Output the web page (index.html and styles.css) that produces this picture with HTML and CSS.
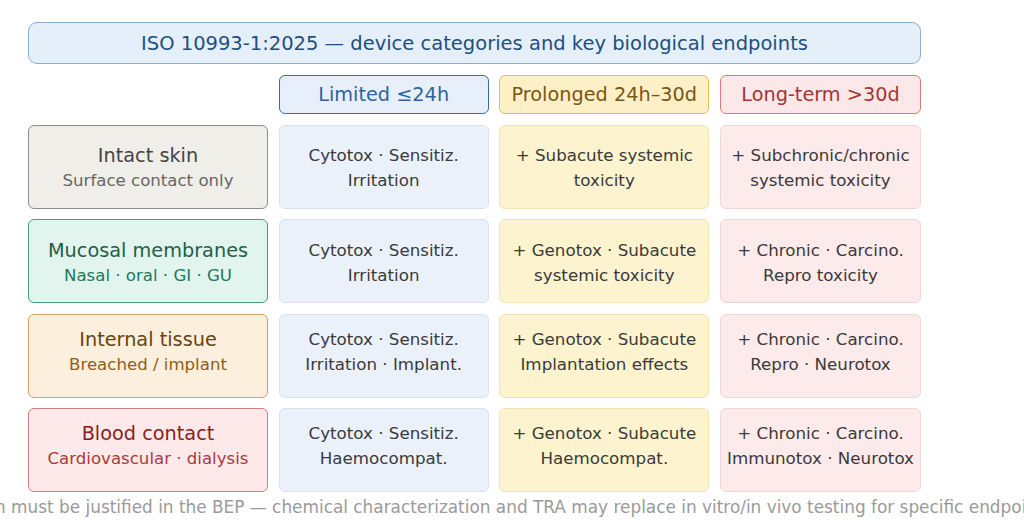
FILE: index.html
```html
<!DOCTYPE html>
<html>
<head>
<meta charset="utf-8">
<link rel="stylesheet" href="styles.css">
</head>
<body>
<div class="page">
  <div class="title">ISO 10993-1:2025 — device categories and key biological endpoints</div>
  <div class="grid">
    <div class="blank"></div>
    <div class="head h-blue">Limited ≤24h</div>
    <div class="head h-yellow">Prolonged 24h–30d</div>
    <div class="head h-red">Long-term &gt;30d</div>

    <div class="cat c-grey"><div class="cat-name">Intact skin</div><div class="cat-sub">Surface contact only</div></div>
    <div class="cell blue">Cytotox · Sensitiz.<br>Irritation</div>
    <div class="cell yellow">+ Subacute systemic<br>toxicity</div>
    <div class="cell red">+ Subchronic/chronic<br>systemic toxicity</div>

    <div class="cat c-green"><div class="cat-name">Mucosal membranes</div><div class="cat-sub">Nasal · oral · GI · GU</div></div>
    <div class="cell blue">Cytotox · Sensitiz.<br>Irritation</div>
    <div class="cell yellow">+ Genotox · Subacute<br>systemic toxicity</div>
    <div class="cell red">+ Chronic · Carcino.<br>Repro toxicity</div>

    <div class="cat c-orange top"><div class="cat-name">Internal tissue</div><div class="cat-sub">Breached / implant</div></div>
    <div class="cell blue top">Cytotox · Sensitiz.<br>Irritation · Implant.</div>
    <div class="cell yellow top">+ Genotox · Subacute<br>Implantation effects</div>
    <div class="cell red top">+ Chronic · Carcino.<br>Repro · Neurotox</div>

    <div class="cat c-pink top"><div class="cat-name">Blood contact</div><div class="cat-sub">Cardiovascular · dialysis</div></div>
    <div class="cell blue top">Cytotox · Sensitiz.<br>Haemocompat.</div>
    <div class="cell yellow top">+ Genotox · Subacute<br>Haemocompat.</div>
    <div class="cell red top">+ Chronic · Carcino.<br>Immunotox · Neurotox</div>
  </div>
  <div class="footer"><span>Test selection must be justified in the BEP — chemical characterization and TRA may replace in vitro/in vivo testing for specific endpoints.</span></div>
</div>
</body>
</html>
```
FILE: styles.css
```css
html, body {
  margin: 0;
  padding: 0;
  background: #ffffff;
  width: 1024px;
  height: 531px;
  overflow: hidden;
}
.page {
  font-family: "DejaVu Sans", sans-serif;
  padding: 22px 0 0 28px;
  width: 893px;
}
.title {
  box-sizing: border-box;
  height: 42px;
  background: #e5effa;
  border: 1.5px solid #89acd0;
  border-radius: 9px;
  color: #1e4f7e;
  font-size: 19.5px;
  display: flex;
  align-items: center;
  justify-content: center;
}
.grid {
  margin-top: 11px;
  display: grid;
  grid-template-columns: 240px 210px 210px 201px;
  grid-template-rows: 39px repeat(4, 84px);
  column-gap: 10.67px;
  row-gap: 10.6px;
}
.head, .cat, .cell {
  box-sizing: border-box;
  border-radius: 6px;
  display: flex;
  flex-direction: column;
  align-items: center;
  justify-content: center;
  text-align: center;
  padding-top: 3px;
}
.head {
  font-size: 19.3px;
  border: 1.3px solid;
  padding-top: 0;
}
.h-blue { background: #e7f0fa; border-color: #3a6d9e; color: #2d64a0; }
.h-yellow { background: #fdf0c6; border-color: #e7bd55; color: #7b5614; }
.h-red { background: #fce8e8; border-color: #dc7a7a; color: #a63434; }

.cat { border: 1.2px solid; line-height: 25px; }
.cat-name { font-size: 19.3px; }
.cat-sub { font-size: 16.6px; }
.c-grey { background: #efeee9; border-color: #8c8c88; color: #444; }
.c-grey .cat-sub { color: #666; }
.c-green { background: #e1f5ee; border-color: #4a9c7c; color: #1d6148; }
.c-green .cat-sub { color: #25785a; }
.c-orange { background: #fcefdd; border-color: #c9a46a; color: #664510; }
.c-orange .cat-sub { color: #8e5f17; }
.c-pink { background: #fde9e9; border-color: #cf7d7d; color: #8c1d1d; }
.c-pink .cat-sub { color: #a93a3a; }

.cell {
  border: 1px solid;
  font-size: 16.7px;
  line-height: 25px;
  color: #3a3a3a;
}
.top { justify-content: flex-start; padding-top: 12px; }
.blue { background: #eaf1fb; border-color: #d8e1ec; }
.yellow { background: #fdf3cf; border-color: #f1e3b6; }
.red { background: #fdeaea; border-color: #f0d6d6; }

.footer {
  margin-top: 5px;
  width: 893px;
  display: flex;
  justify-content: center;
  white-space: nowrap;
  font-size: 16.9px;
  color: #9a9a9a;
}
```
